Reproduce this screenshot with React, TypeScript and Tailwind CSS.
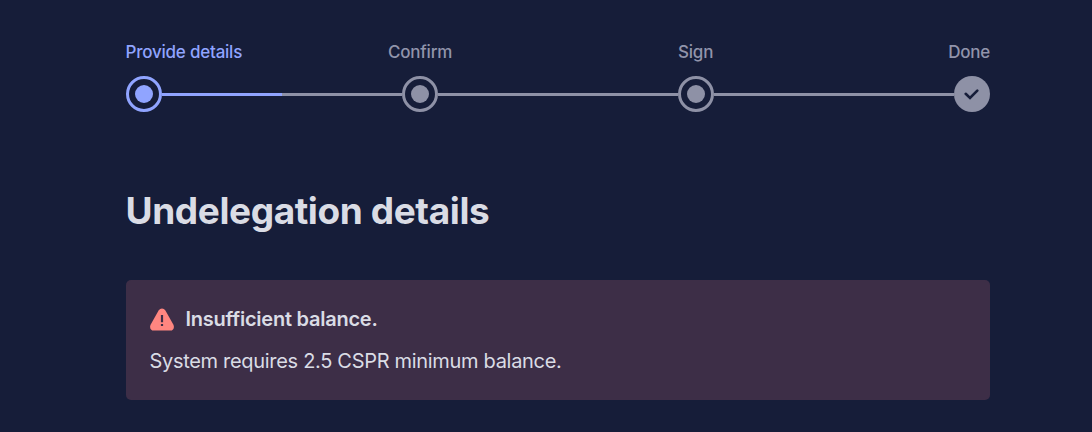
import { Fragment } from "react";

type StepStatus = "active" | "upcoming" | "final";

interface Step {
  label: string;
  status: StepStatus;
}

const steps: Step[] = [
  { label: "Provide details", status: "active" },
  { label: "Confirm", status: "upcoming" },
  { label: "Sign", status: "upcoming" },
  { label: "Done", status: "final" },
];

function StepMarker({ status }: { status: StepStatus }) {
  if (status === "final") {
    return (
      <div className="flex size-9 shrink-0 items-center justify-center rounded-full bg-[#8e91a6]">
        <svg width="16" height="12" viewBox="0 0 16 12" fill="none">
          <path
            d="M1.7 5.8L6 9.9L13.3 2.6"
            stroke="#161d39"
            strokeWidth="2.6"
            strokeLinecap="round"
          />
        </svg>
      </div>
    );
  }

  const active = status === "active";
  return (
    <div
      className={`flex size-9 shrink-0 items-center justify-center rounded-full border-3 ${
        active ? "border-[#90a4ff]" : "border-[#8e91a6]"
      }`}
    >
      <div
        className={`size-[18px] rounded-full ${active ? "bg-[#90a4ff]" : "bg-[#8e91a6]"}`}
      />
    </div>
  );
}

function Stepper() {
  return (
    <div>
      <div className="-ml-[0.5px] grid grid-cols-[262.5px_290px_auto_auto] text-[17px] leading-6 font-medium tracking-[-0.22px] text-[#9194ab]">
        {steps.map((step, i) => (
          <span
            key={step.label}
            className={`${i === 0 ? "text-[#90a4ff]" : ""} ${i === 3 ? "text-right" : ""}`}
          >
            {step.label}
          </span>
        ))}
      </div>
      <div className="mt-3 flex items-center">
        {steps.map((step, i) => (
          <Fragment key={step.label}>
            {i > 0 && (
              <div className="h-[3px] flex-1 bg-[#8e91a6]">
                {i === 1 && <div className="h-full w-1/2 bg-[#90a4ff]" />}
              </div>
            )}
            <StepMarker status={step.status} />
          </Fragment>
        ))}
      </div>
    </div>
  );
}

function WarningIcon() {
  return (
    <svg width="24" height="24" viewBox="0 0 24 24" fill="none">
      <path
        d="M8.6 3.5C10.2.7 13.8.7 15.4 3.5L23.3 17.6C24.8 20.3 23.4 23.6 20.3 23.6H3.7C.6 23.6-.8 20.3.7 17.6Z"
        fill="#ff8680"
      />
      <path d="M12 8V15.3M12 17V19" stroke="#3d2e47" strokeWidth="2.2" />
    </svg>
  );
}

function BalanceAlert() {
  return (
    <div className="h-[120px] rounded-[5px] bg-[#3d2e47] px-6 pt-6 text-[#dadce5]">
      <div className="flex h-[30px] items-center gap-[11.5px]">
        <WarningIcon />
        <p className="text-xl font-semibold tracking-[-0.24px]">
          Insufficient balance.
        </p>
      </div>
      <p className="mt-3 -ml-[0.5px] text-xl leading-[30px] tracking-[-0.31px]">
        System requires 2.5 CSPR minimum balance.
      </p>
    </div>
  );
}

export default function App() {
  return (
    <main className="h-[432px] bg-[#161d39] pt-10 pl-[126px] font-['Inter',sans-serif]">
      <div className="w-[864px]">
        <Stepper />
        <h1 className="mt-[75px] -ml-[0.5px] text-[37px] leading-[48px] font-bold tracking-[-0.4px] text-[#dadce5]">
          Undelegation details
        </h1>
        <div className="mt-[45px]">
          <BalanceAlert />
        </div>
      </div>
    </main>
  );
}
